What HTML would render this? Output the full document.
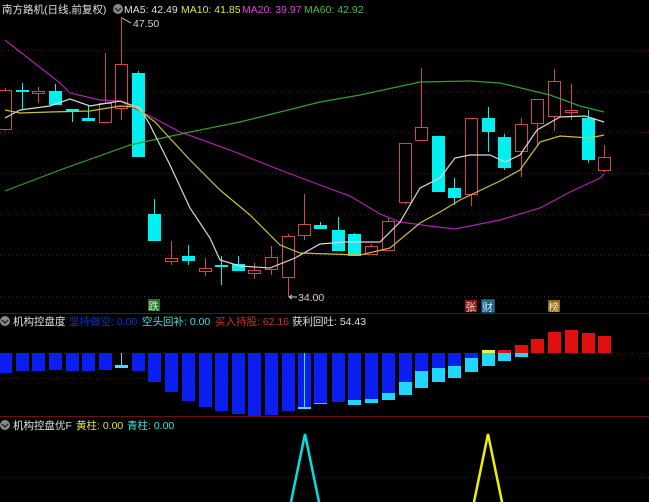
<!DOCTYPE html>
<html><head><meta charset="utf-8"><style>
html,body{margin:0;padding:0;background:#000;width:649px;height:502px;overflow:hidden}
svg{display:block}
text{font-family:"Liberation Sans","Noto Sans CJK SC",sans-serif;font-size:10.5px}
</style></head><body>
<svg id="s" width="649" height="502" viewBox="0 0 649 502" xmlns="http://www.w3.org/2000/svg">
<g stroke="#5a1a1a" stroke-dasharray="1,3" stroke-width="1">
<line x1="0" y1="50.5" x2="649" y2="50.5"/><line x1="0" y1="91.5" x2="649" y2="91.5"/>
<line x1="0" y1="132.5" x2="649" y2="132.5"/><line x1="0" y1="173.5" x2="649" y2="173.5"/>
<line x1="0" y1="214.5" x2="649" y2="214.5"/><line x1="0" y1="255.5" x2="649" y2="255.5"/>
<line x1="0" y1="296.5" x2="649" y2="296.5"/><line x1="0" y1="353.5" x2="649" y2="353.5"/>
<line x1="0" y1="378.5" x2="649" y2="378.5"/><line x1="0" y1="477.5" x2="649" y2="477.5"/>
</g>
<line x1="0" y1="313.5" x2="649" y2="313.5" stroke="#6a1010"/>
<line x1="0" y1="416.5" x2="649" y2="416.5" stroke="#6a1010"/>
<g id="c"></g>
<g fill="none" stroke-width="1.2">
<polyline stroke="#b020b0" points="5,40 60,83 70,93 100,100 120,101 150,116 180,132 230,150 280,170 320,185 350,196 380,214 400,222 430,226 455,229 500,220 540,208 570,192 600,178 604,174"/>
<polyline stroke="#30a030" points="5,191 60,170 130,145 190,132 240,122 320,102 360,95 420,82 470,81 500,83 550,95 580,106 604,112"/>
<polyline stroke="#d8d8d8" points="5,118 20,110 50,106 70,99 90,106 120,101 140,108 150,125 170,165 190,208 210,238 220,260 240,266 270,268 295,258 320,244 345,242 380,242 400,222 420,188 440,178 455,158 470,155 490,155 505,162 520,155 537,130 560,117 585,116 604,122"/>
<polyline stroke="#c8c040" points="5,110 20,113 50,112 90,111 120,106 135,107 155,122 190,160 220,190 250,215 280,245 300,253 330,254 360,255 390,248 420,223 440,212 460,200 500,181 520,170 540,142 560,136 590,138 604,135"/>
</g>
<g id="b"></g>
<polyline points="291,502 305,434 319,502" fill="none" stroke="#00e0e0" stroke-width="2.5"/>
<polyline points="474,502 488,434 502,502" fill="none" stroke="#f0f000" stroke-width="2.5"/>
<text x="2" y="13" fill="#e0e0e0">南方路机(日线,前复权)</text>
<circle cx="118" cy="9" r="5" fill="#888"/><path d="M115,8 L118,11 L121,8" stroke="#222" fill="none" stroke-width="1.3"/>
<text x="124" y="13" fill="#e0e0e0">MA5: 42.49</text>
<text x="181" y="13" fill="#e0e040">MA10: 41.85</text>
<text x="242" y="13" fill="#e040e0">MA20: 39.97</text>
<text x="304" y="13" fill="#40c040">MA60: 42.92</text>
<text x="133" y="27" fill="#d0d0d0">47.50</text>
<path d="M122,18 L131,23" stroke="#ccc"/>
<text x="298" y="301" fill="#d0d0d0">34.00</text>
<path d="M289,297 L297,297 M289,297 L292,295 M289,297 L292,299" stroke="#ccc"/>
<rect x="148" y="299" width="12" height="12" fill="#2e6a2e"/><text x="148.5" y="309.5" fill="#c0ffc0" font-size="11">跌</text>
<rect x="465" y="300" width="12" height="12" fill="#8a1a1a"/><text x="465.5" y="310.5" fill="#ffd0d0">张</text>
<rect x="482" y="300" width="12" height="12" fill="#1a5a7a" stroke="#3090c0"/><text x="482.5" y="310.5" fill="#d0f0ff">财</text>
<rect x="548" y="300" width="12" height="12" fill="#8a6a20"/><text x="548.5" y="310.5" fill="#ffe8b0">榜</text>
<circle cx="5" cy="321" r="5" fill="#888"/><path d="M2,320 L5,323 L8,320" stroke="#222" fill="none" stroke-width="1.3"/>
<text x="13" y="325" fill="#e0e0e0">机构控盘度</text>
<text x="69" y="325" fill="#1030d0">坚持做空: 0.00</text>
<text x="142" y="325" fill="#40e0e0">空头回补: 0.00</text>
<text x="215" y="325" fill="#d03030">买入持股: 62.16</text>
<text x="292" y="325" fill="#e0e0e0">获利回吐: 54.43</text>
<circle cx="5" cy="425" r="5" fill="#888"/><path d="M2,424 L5,427 L8,424" stroke="#222" fill="none" stroke-width="1.3"/>
<text x="13" y="429" fill="#e0e0e0">机构控盘优F</text>
<text x="76" y="429" fill="#e0e040">黄柱: 0.00</text>
<text x="127" y="429" fill="#40e0e0">青柱: 0.00</text>
</svg>
<script>
var N="http://www.w3.org/2000/svg";
function el(p,t,a){var e=document.createElementNS(N,t);for(var k in a)e.setAttribute(k,a[k]);p.appendChild(e);}
var C=[[5,90,129,88,131,'r'],[22,90,92,83,110,'c'],[38,91,93,87,103,'r'],[55,91,105,84,105,'c'],[72,109,112,109,122,'c'],[88,118,121,105,121,'c'],
[105,103,122,53,122,'r'],[121,64,108,17,120,'r'],[138,73,157,71,157,'c'],[154,214,241,199,241,'c'],[171,258,261,241,265,'r'],[188,256,261,245,265,'c'],
[205,268,271,258,276,'r'],[221,265,267,256,285,'c'],[238,264,271,256,271,'c'],[254,270,273,263,279,'r'],[271,257,269,246,275,'r'],[288,236,277,234,297,'r'],
[304,224,235,194,240,'r'],[320,225,229,222,229,'c'],[338,230,251,217,251,'c'],[354,234,256,233,256,'c'],[371,246,254,244,254,'r'],[388,221,250,218,250,'r'],
[405,143,202,143,204,'r'],[421,127,140,68,141,'r'],[438,136,192,136,192,'c'],[454,188,198,178,205,'c'],[471,118,194,118,206,'r'],[488,118,132,107,152,'c'],
[504,137,168,134,170,'c'],[521,124,151,118,177,'r'],[537,99,123,99,146,'r'],[554,81,116,69,131,'r'],[571,110,112,84,120,'r'],[588,118,160,110,163,'c'],[604,157,170,145,172,'r']];
var g=document.getElementById('c');
C.forEach(function(d){var x=d[0],col=d[5]=='r'?'#d04848':'#00f0f0';
el(g,'line',{x1:x+.5,y1:d[3],x2:x+.5,y2:d[4],stroke:col});
if(d[5]=='r'){el(g,'rect',{x:x-5.5,y:d[1]+.5,width:12,height:Math.max(1,d[2]-d[1]),fill:'#000',stroke:col});}
else el(g,'rect',{x:x-6,y:d[1],width:13,height:Math.max(2,d[2]-d[1]),fill:col});});
var B=[373,371,371,370,371,371,370,-1,371,382,392,401,407,411,414,416,415,411,-2,404,402,405,403,400,395,388,382,378,372,366];
var CY=[0,0,0,0,0,0,0,0,0,0,0,0,0,0,0,0,0,0,0,403,402,400,399,393,382,371,368,366,358,353];
var b=document.getElementById('b');var W=13,H=6;
for(var i=0;i<C.length;i++){var x=C[i][0];
if(i<30){var bt=B[i];
 if(bt==-1){el(b,'line',{x1:x+.5,y1:353,x2:x+.5,y2:366,stroke:'#40e0ff'});el(b,'rect',{x:x-H,y:365,width:W,height:3,fill:'#40e0ff'});continue;}
 if(bt==-2){el(b,'rect',{x:x-H,y:353,width:W,height:55,fill:'#0a1ef0'});el(b,'line',{x1:x+.5,y1:353,x2:x+.5,y2:407,stroke:'#40e0ff'});el(b,'rect',{x:x-H,y:407,width:W,height:2,fill:'#40e0ff'});continue;}
 el(b,'rect',{x:x-H,y:353,width:W,height:bt-353,fill:'#0a1ef0'});
 if(CY[i])el(b,'rect',{x:x-H,y:CY[i],width:W,height:bt-CY[i],fill:'#20d8ff'});
 if(i==29)el(b,'rect',{x:x-H,y:350,width:W,height:3,fill:'#f0f040'});
}else{var R={30:[350,361],31:[345,357],32:[339,353],33:[332,353],34:[330,353],35:[333,353],36:[336,353]}[i];
 el(b,'rect',{x:x-H,y:R[0],width:W,height:353-R[0],fill:'#e01010'});
 if(R[1]>353)el(b,'rect',{x:x-H,y:353,width:W,height:R[1]-353,fill:'#20d8ff'});}
}
</script>
</body></html>
